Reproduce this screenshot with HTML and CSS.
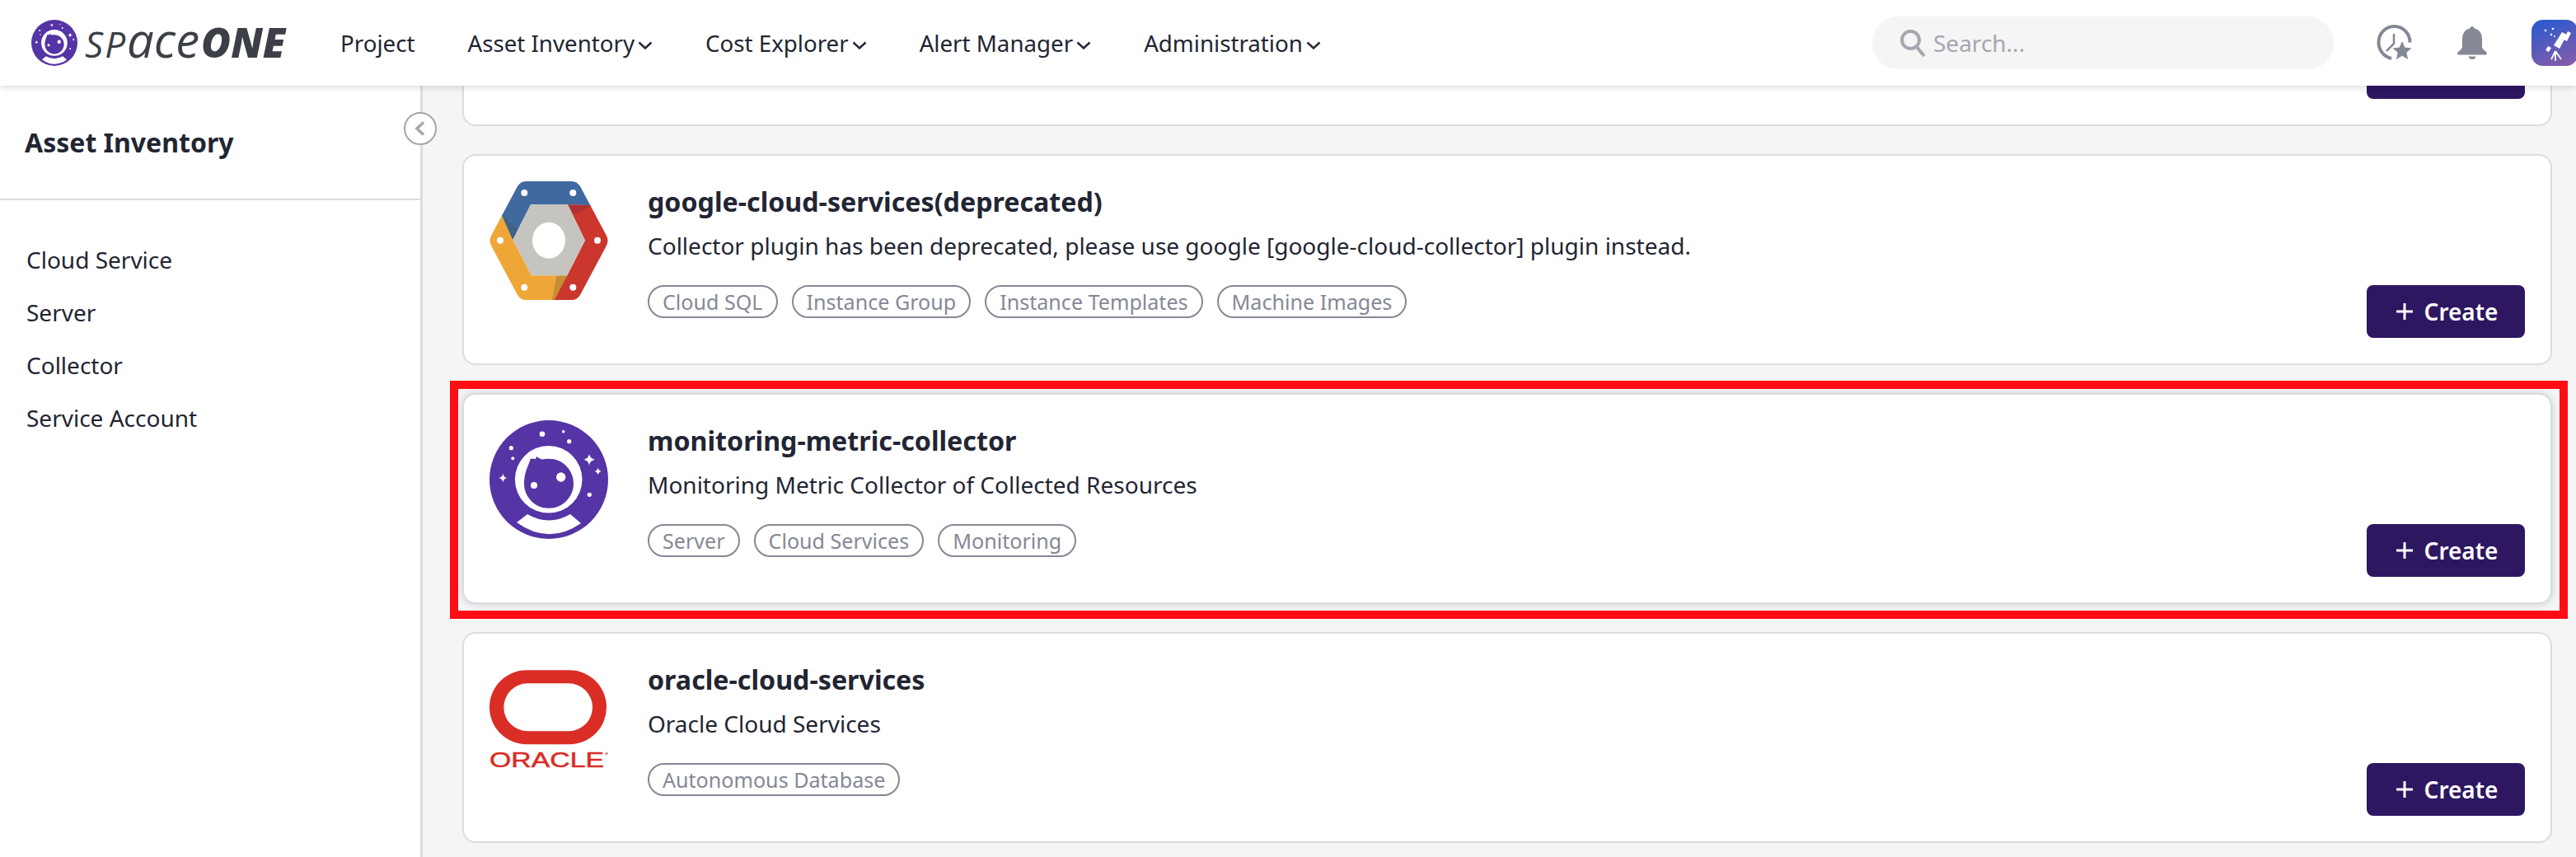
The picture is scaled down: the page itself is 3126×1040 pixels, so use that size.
FILE: index.html
```html
<!DOCTYPE html>
<html lang="en">
<head>
<meta charset="utf-8">
<title>SpaceONE - Collector</title>
<link rel="stylesheet" href="styles.css">
</head>
<body>
<svg class="defs" width="0" height="0" aria-hidden="true">
  <symbol id="space-logo" viewBox="0 0 144 144">
    <circle cx="72" cy="72" r="72" fill="#5534a5"/>
    <g fill="#fff">
      <circle cx="64" cy="16.7" r="3.3"/><circle cx="89.7" cy="13.7" r="1.8"/><circle cx="96.7" cy="25.7" r="2.6"/>
      <circle cx="26.3" cy="33.7" r="2.6"/><circle cx="28.3" cy="46.3" r="2"/><circle cx="121.3" cy="90.3" r="2.6"/>
      <path d="M121 41Q122 46.500 128 47.700Q122 49 121 54.500Q120 49 114.500 47.700Q120 46.500 121 41Z"/>
      <path d="M131.700 57.500Q132.300 61.300 136 62Q132.300 62.700 131.700 66.500Q131 62.700 127.500 62Q131 61.300 131.700 57.500Z"/>
      <path d="M16.300 64.500Q17 69.300 21.500 70Q17 70.700 16.300 75.500Q15.600 70.700 11 70Q15.600 69.300 16.300 64.500Z"/>
      <circle cx="71.700" cy="71.800" r="40.800"/>
      <path d="M46 114Q72 129 98 114L111 125Q72 152 33 124Z"/>
    </g>
    <path fill="#5534a5" d="M48 52L50 46.500L56 47L57 44L63 47.500C66 46.800 69 46.700 72 46.700C88.600 46.700 102 60.100 102 76.700C102 93.300 88.600 106.700 72 106.700C55.400 106.700 42 93.300 42 76.700C42 67 45 59 48 52Z"/>
    <circle cx="86.700" cy="69" r="5.700" fill="#fff"/>
    <circle cx="54" cy="79" r="4" fill="#fff"/>
  </symbol>
  <symbol id="chev" viewBox="0 0 18 10">
    <path d="M1.500 1.500L9 8.500L16.500 1.500" fill="none" stroke="#222532" stroke-width="2.400"/>
  </symbol>
  <symbol id="plus" viewBox="0 0 20 20">
    <path d="M10 0V20M0 10H20" fill="none" stroke="#fff" stroke-width="3"/>
  </symbol>
</svg>

<header class="topbar">
  <a class="brand">
    <svg class="brand-mark"><use href="#space-logo"/></svg>
    <span class="word"><span class="word-thin">SP<span class="word-uni">ace</span></span><span class="word-bold">ONE</span></span>
  </a>
  <nav class="nav">
    <a class="nav-item">Project</a>
    <a class="nav-item">Asset Inventory<svg class="chev"><use href="#chev"/></svg></a>
    <a class="nav-item">Cost Explorer<svg class="chev"><use href="#chev"/></svg></a>
    <a class="nav-item">Alert Manager<svg class="chev"><use href="#chev"/></svg></a>
    <a class="nav-item">Administration<svg class="chev"><use href="#chev"/></svg></a>
  </nav>
  <div class="search">
    <svg class="search-icon" viewBox="0 0 34 34"><circle cx="13.500" cy="13.500" r="10.500" fill="none" stroke="#a4a6b0" stroke-width="4"/><path d="M21 22L30 33" fill="none" stroke="#a4a6b0" stroke-width="4"/></svg>
    <span class="search-text">Search...</span>
  </div>
  <svg class="history" viewBox="0 0 44 44">
    <path d="M18 41C9 39 2.500 31 2.500 21.500C2.500 10.500 11 2 21.500 2C32 2 40.500 10.500 40.500 21.500" fill="none" stroke="#858895" stroke-width="4"/>
    <path d="M21 11V23L12 32" fill="none" stroke="#858895" stroke-width="2.500"/>
    <path d="M31 20L34.300 27.600L42.500 28.400L36.300 33.800L38.100 42L31 37.700L23.900 42L25.700 33.800L19.500 28.400L27.700 27.600Z" fill="#858895"/>
  </svg>
  <svg class="bell" viewBox="0 0 38 40">
    <path d="M19 0C20.500 0 21.500 1 21.500 2.400C27.500 3.600 31 8.500 31 15V24C31 27 33 28.500 35.500 30.500C37.500 32 37.500 34.500 35 34.500H3C.5 34.500 .5 32 2.500 30.500C5 28.500 7 27 7 24V15C7 8.500 10.500 3.600 16.500 2.400C16.500 1 17.500 0 19 0Z" fill="#858895"/>
    <path d="M14.500 36.500H23.500C23 38.500 21.500 40 19 40C16.500 40 15 38.500 14.500 36.500Z" fill="#858895"/>
  </svg>
  <div class="avatar">
    <svg viewBox="0 0 56 56" width="56" height="56">
      <g fill="#fff">
        <circle cx="17" cy="13" r="1.300"/><circle cx="26" cy="11" r="1.300"/><circle cx="24" cy="18" r="1.300"/><circle cx="28" cy="20" r="1"/>
        <path d="M37 15L43 18L34 35L27 31Z"/>
        <path d="M44 14L48 16L43 26L39 24Z"/>
        <path d="M20 32L24 34L21 39L17 37Z"/>
      </g>
      <path d="M29 38L24 48M29 38V50M29 38L36 48" fill="none" stroke="#fff" stroke-width="1.800"/>
    </svg>
  </div>
</header>

<div class="body">
  <aside class="sidebar">
    <div class="side-head"><h2 class="side-title">Asset Inventory</h2></div>
    <ul class="side-menu">
      <li class="side-item">Cloud Service</li>
      <li class="side-item">Server</li>
      <li class="side-item">Collector</li>
      <li class="side-item">Service Account</li>
    </ul>
    <button class="collapse" aria-label="Collapse">
      <svg viewBox="0 0 13 18" width="13" height="18"><path d="M11 1.500L3 9L11 16.500" fill="none" stroke="#a4a6b0" stroke-width="3.500"/></svg>
    </button>
  </aside>

  <main class="main">
    <div class="list">
      <article class="card">
        <div class="info"></div>
        <button class="create" aria-label="Create"></button>
      </article>

      <article class="card">
        <svg class="logo" viewBox="0 0 144 144">
          <defs><clipPath id="hex"><path d="M44 0H100Q106 0 110 6L142 66Q145 72 142 78L110 138Q106 144 100 144H44Q38 144 34 138L2 78Q-1 72 2 66L34 6Q38 0 44 0Z"/></clipPath></defs>
          <g clip-path="url(#hex)">
            <path fill="#406a9f" d="M-5 -5H150L124.300 29.300L95 28.300H50L28.300 71L14.300 40Z"/>
            <path fill="#cb362d" d="M95 28.300L124.300 29.300L150 72L110 150H72L76 144L94.300 114.300L116 71.700Z"/>
            <path fill="#eea637" d="M14.300 40L28.300 71L51 114.300H81L76 150H20L-5 72Z"/>
            <path fill="#3f6288" d="M14.300 40L34.300 58.300L28.300 71Z"/>
            <path fill="#b03030" d="M95 28.300L124.300 29.300L102 41Z"/>
            <path fill="#c48e34" d="M81 114.300H94.300L79 144H76Z"/>
          </g>
          <path fill="#c5c4be" fill-rule="evenodd" d="M50 28.300H95L116 71.700L94.300 114.300H51L28.300 71ZM52 71.700A20 22 0 0 0 92 71.700A20 22 0 0 0 52 71.700Z"/>
          <g fill="#fff">
            <circle cx="42.300" cy="14" r="4"/><circle cx="101.300" cy="14" r="4"/><circle cx="131" cy="71.700" r="4"/>
            <circle cx="101.300" cy="128.700" r="4"/><circle cx="42.300" cy="128.700" r="4"/><circle cx="13" cy="71.700" r="4"/>
          </g>
        </svg>
        <div class="info">
          <h3 class="name">google-cloud-services(deprecated)</h3>
          <p class="desc">Collector plugin has been deprecated, please use google [google-cloud-collector] plugin instead.</p>
          <div class="tags"><span class="tag">Cloud SQL</span><span class="tag">Instance Group</span><span class="tag">Instance Templates</span><span class="tag">Machine Images</span></div>
        </div>
        <button class="create"><svg class="plus"><use href="#plus"/></svg>Create</button>
      </article>

      <article class="card card-marked">
        <svg class="logo"><use href="#space-logo"/></svg>
        <div class="info">
          <h3 class="name">monitoring-metric-collector</h3>
          <p class="desc">Monitoring Metric Collector of Collected Resources</p>
          <div class="tags"><span class="tag">Server</span><span class="tag">Cloud Services</span><span class="tag">Monitoring</span></div>
        </div>
        <button class="create"><svg class="plus"><use href="#plus"/></svg>Create</button>
        <div class="mark"></div>
      </article>

      <article class="card">
        <svg class="logo" viewBox="0 0 144 144">
          <path fill="#d92d26" fill-rule="evenodd" d="M45 13.300H97A45 45 0 0 1 97 103.300H45A45 45 0 0 1 45 13.300ZM46.300 29.300A29 29 0 0 0 46.300 87.300H96A29 29 0 0 0 96 29.300Z"/>
          <text class="oracle" x="0" y="130.700" textLength="139" lengthAdjust="spacingAndGlyphs">ORACLE</text>
          <circle cx="142" cy="114.500" r="1.800" fill="#e8827e"/>
        </svg>
        <div class="info">
          <h3 class="name">oracle-cloud-services</h3>
          <p class="desc">Oracle Cloud Services</p>
          <div class="tags"><span class="tag">Autonomous Database</span></div>
        </div>
        <button class="create"><svg class="plus"><use href="#plus"/></svg>Create</button>
      </article>
    </div>
  </main>
</div>
</body>
</html>
```

FILE: styles.css
```css
* { box-sizing: border-box; }
html, body { margin: 0; padding: 0; height: 1040px; overflow: hidden; }
body { font-family: "Noto Sans", sans-serif; color: #222532; background: #f5f5f5; }
h2, h3, p, ul { margin: 0; padding: 0; }
.defs { position: absolute; }

.topbar {
  position: relative; z-index: 5; display: flex; align-items: center;
  height: 104px; padding-left: 38px; background: #fff;
  box-shadow: 0 2px 8px rgba(0, 0, 0, .14); overflow: visible;
}
.brand { display: flex; align-items: center; width: 375px; flex: none; }
.brand-mark { width: 56px; height: 56px; flex: none; }
.word { display: flex; align-items: baseline; margin-left: 9px; font-size: 44px; line-height: 56px; font-style: italic; color: #3c3f48; font-family: "Open Sans", sans-serif; }
.word-thin { font-weight: 400; letter-spacing: 2px; white-space: nowrap; }
.word-uni { font-size: 58px; line-height: 40px; letter-spacing: 0; }
.word-bold { font-weight: 800; margin-left: 2px; font-size: 49px; letter-spacing: 0; }

.nav { display: flex; gap: 64px; font-size: 27.7px; line-height: 40px; }
.nav-item { display: flex; align-items: center; white-space: nowrap; }
.chev { width: 18px; height: 10px; margin: 6px 0 0 4px; }

.search {
  display: flex; align-items: center; width: 560px; height: 64px;
  margin-left: auto; padding-left: 33px; border-radius: 32px; background: #f5f5f5;
}
.search-icon { width: 34px; height: 34px; flex: none; }
.search-text { margin-left: 7px; font-size: 28px; color: #a4a6b0; }
.history { width: 44px; height: 44px; margin-left: 52px; flex: none; }
.bell { width: 38px; height: 40px; margin-left: 53px; flex: none; }
.avatar { width: 56px; height: 56px; margin: 0 -2px 0 53px; flex: none; border-radius: 14px; background: linear-gradient(160deg, #2459d2, #8c5ca6); }
.avatar svg { display: block; }

.body { display: flex; height: 936px; }
.sidebar {
  position: relative; z-index: 2; width: 513px; flex: none; background: #fff;
  border-right: 3px solid #dcdcdc;
}
.side-head { display: flex; align-items: center; height: 139px; padding-left: 30px; border-bottom: 2px solid #dcdcdc; }
.side-title { font-size: 32px; font-weight: 700; line-height: 44px; }
.side-menu { list-style: none; padding-top: 40px; }
.side-item { height: 64px; padding-left: 32px; font-size: 28px; line-height: 64px; }
.collapse {
  position: absolute; left: 490px; top: 32px; display: flex; align-items: center; justify-content: center;
  width: 40px; height: 40px; padding: 0 2px 0 0; background: #fff; border: 2px solid #a4a6b0; border-radius: 50%;
}

.main { flex: 1; min-width: 0; overflow: hidden; padding: 0 29px 0 48px; }
.list { display: flex; flex-direction: column; gap: 34px; margin-top: -207px; }
.card {
  position: relative; display: flex; flex: none; height: 256px; padding: 31px;
  background: #fff; border: 2px solid #dcdcdc; border-radius: 16px;
}
.card-marked { box-shadow: 0 0 10px rgba(73, 59, 130, .22); }
.mark { position: absolute; top: -17px; left: -17px; right: -21px; bottom: -20px; border: 10px solid #ff0d14; }
.logo { width: 144px; height: 144px; flex: none; margin-right: 48px; }
.oracle { font-family: "Liberation Sans", sans-serif; font-size: 25px; font-weight: 400; fill: #d92d26; stroke: #d92d26; stroke-width: .5px; }
.info { flex: 1; min-width: 0; }
.name { font-size: 32.2px; font-weight: 700; line-height: 50px; }
.desc { margin-top: 8px; font-size: 28px; line-height: 40px; }
.tags { display: flex; gap: 17px; margin-top: 28px; }
.tag {
  display: flex; align-items: center; height: 40px; padding: 0 16px;
  border: 2px solid #858895; border-radius: 20px; font-size: 25.1px; color: #858895; white-space: nowrap;
}
.create {
  display: flex; align-items: center; justify-content: center; align-self: flex-end; flex: none;
  width: 192px; height: 64px; padding: 0 0 0 3px; border: 0; border-radius: 8px;
  background: #2d1761; color: #fff; font: 600 28px "Noto Sans", sans-serif;
}
.plus { width: 20px; height: 20px; margin-right: 14px; }
```
